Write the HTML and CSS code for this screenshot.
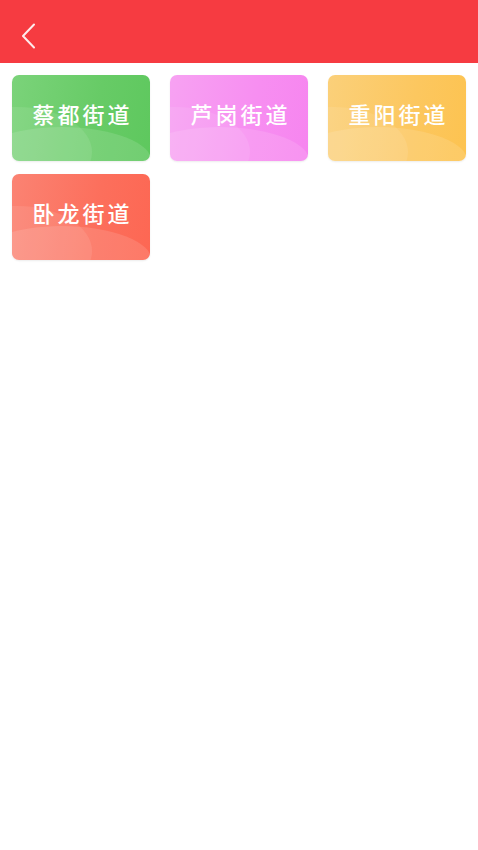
FILE: index.html
```html
<!DOCTYPE html>
<html lang="zh-CN">
<head>
  <meta charset="UTF-8" />
  <meta name="viewport" content="width=device-width, initial-scale=1" />
  <title>街道</title>
  <link rel="stylesheet" href="styles.css">
</head>
<body>
  <!-- Top Bar -->
  <header class="top-bar">
    <span class="back-btn">
      <svg viewBox="0 0 16 26" width="16" height="26" xmlns="http://www.w3.org/2000/svg">
        <polyline points="13,1.5 2,13 13,24.5" fill="none" stroke="#fff" stroke-width="2" stroke-linecap="round" stroke-linejoin="round"/>
      </svg>
    </span>
  </header>

  <!-- Street list -->
  <section class="street-grid">
    <div class="street-card green"><span>蔡都街道</span></div>
    <div class="street-card pink"><span>芦岗街道</span></div>
    <div class="street-card yellow"><span>重阳街道</span></div>
    <div class="street-card red"><span>卧龙街道</span></div>
  </section>
</body>
</html>
```
FILE: styles.css
```css
/* Reset default styling */
* {
  margin: 0;
  padding: 0;
  box-sizing: border-box;
}

body {
  font-family: "Noto Sans CJK SC", "Noto Sans", sans-serif;
  background: #fff;
  width: 478px;
  min-height: 850px;
}

/* Top bar */
.top-bar {
  height: 63px;
  background: #f63b41;
  display: flex;
  align-items: center;
  padding-left: 21px;
}

.back-btn {
  display: flex;
  margin-top: 9px;
  opacity: 0.9;
}

/* Grid of streets */
.street-grid {
  display: grid;
  grid-template-columns: repeat(3, 138px);
  column-gap: 20px;
  row-gap: 13px;
  padding: 12px 12px;
}

.street-card {
  position: relative;
  height: 86px;
  border-radius: 7px;
  overflow: hidden;
  display: flex;
  align-items: center;
  justify-content: center;
  box-shadow: 0 1px 2px rgba(0, 0, 0, 0.08);
}

/* soft light waves in the lower left */
.street-card::before,
.street-card::after {
  content: "";
  position: absolute;
  border-radius: 50%;
  background: rgba(255, 255, 255, 0.12);
}

.street-card::before {
  width: 180px;
  height: 70px;
  left: -40px;
  top: 52px;
}

.street-card::after {
  width: 150px;
  height: 90px;
  left: -70px;
  top: 32px;
  background: rgba(255, 255, 255, 0.09);
}

.street-card span {
  position: relative;
  z-index: 1;
  color: #fff;
  font-size: 22px;
  font-weight: 500;
  letter-spacing: 3px;
  margin-right: -3px;
  margin-top: -10px;
}

.green {
  background: linear-gradient(100deg, #7bd37a 0%, #67cb66 60%, #5ec85e 100%);
}

.pink {
  background: linear-gradient(100deg, #f7a2f2 0%, #f78ef1 60%, #f685ef 100%);
}

.yellow {
  background: linear-gradient(100deg, #fbd07a 0%, #fcc75f 60%, #fdc350 100%);
}

.red {
  background: linear-gradient(100deg, #fb8373 0%, #fc6f5c 60%, #fd6753 100%);
}
```
